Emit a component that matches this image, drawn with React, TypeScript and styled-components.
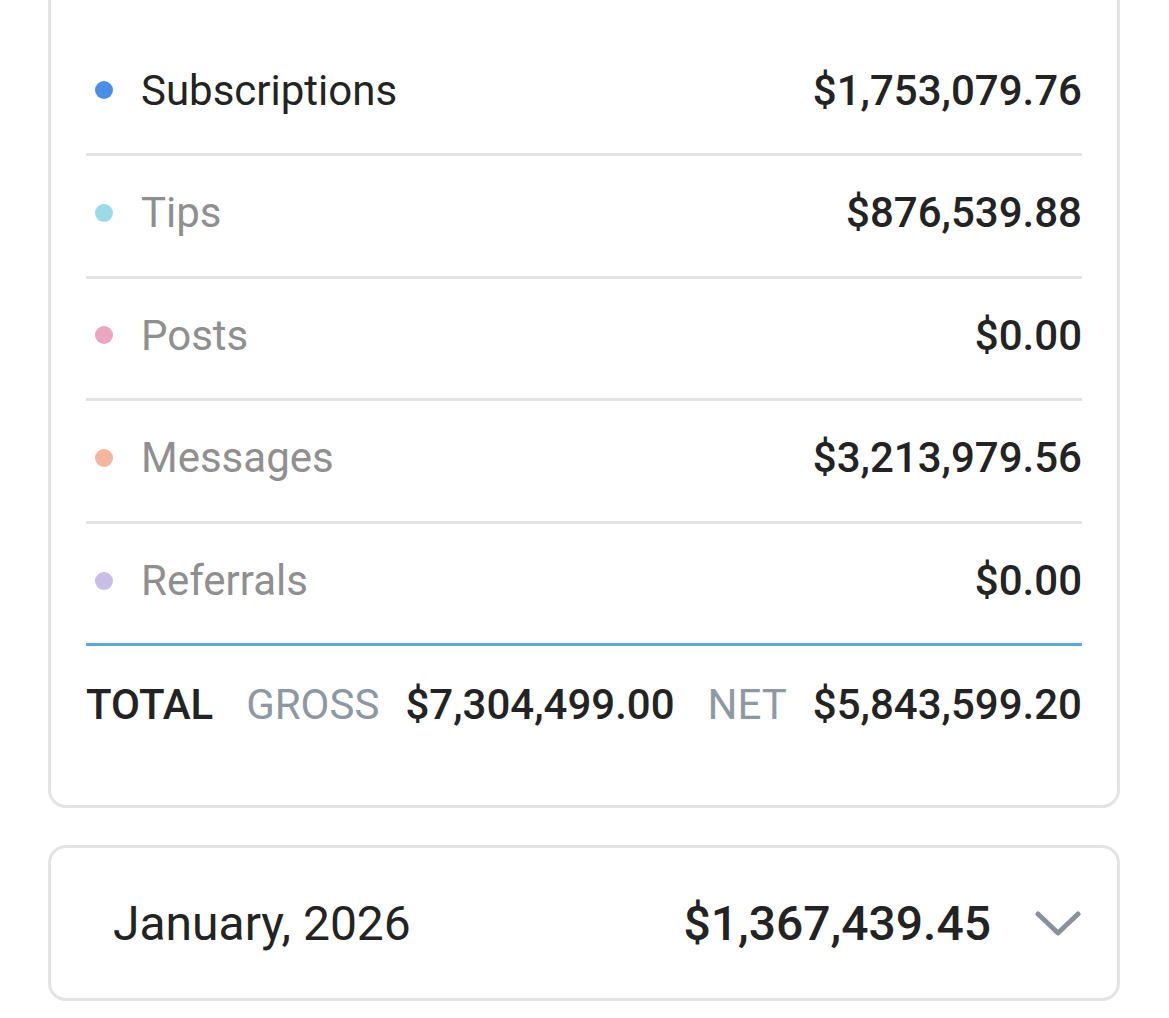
import React from "react";
import styled, { createGlobalStyle } from "styled-components";

const GlobalStyle = createGlobalStyle`
  html, body {
    margin: 0;
    padding: 0;
    background: #ffffff;
    overflow: hidden;
  }
  body {
    font-family: Roboto, "Noto Sans", Arial, sans-serif;
    color: #232323;
    -webkit-font-smoothing: antialiased;
  }
`;

const Page = styled.div`
  display: flex;
  flex-direction: column;
  gap: 37px;
  padding: 0 49px 0 48px;
`;

const Card = styled.section`
  border: 3px solid #e3e3e3;
  border-radius: 18px;
  background: #fff;
  margin-top: -20px;
  padding: 50.4px 35px 43px 35px;
`;

const List = styled.div`
  display: flex;
  flex-direction: column;
`;

const Row = styled.div`
  display: flex;
  align-items: center;
  justify-content: space-between;
  height: 113.6px;
  padding-bottom: 6px;
  border-bottom: 3px solid #e3e3e3;
  &:last-child {
    border-bottom-color: #5aa9da;
  }
`;

const Label = styled.div<{ $active: boolean }>`
  display: flex;
  align-items: center;
  gap: 28px;
  font-size: 42px;
  font-weight: 400;
  color: ${(p) => (p.$active ? "#232323" : "#8f8f8f")};
`;

const Dot = styled.span<{ $color: string }>`
  width: 18px;
  height: 18px;
  border-radius: 50%;
  background: ${(p) => p.$color};
  margin-left: 9px;
  flex: none;
`;

const Amount = styled.div<{ $size?: number }>`
  font-size: ${(p) => p.$size ?? 42}px;
  font-weight: 500;
  color: #232323;
`;

const TotalRow = styled.div`
  display: flex;
  align-items: center;
  justify-content: space-between;
  height: 116px;
`;

const TotalLabel = styled.div`
  font-size: 42px;
  font-weight: 500;
  color: #232323;
`;

const Group = styled.div`
  display: flex;
  align-items: center;
  gap: 26px;
`;

const Caption = styled.span`
  font-size: 42px;
  font-weight: 400;
  color: #8e98a3;
`;

const MonthCard = styled.section`
  border: 3px solid #e3e3e3;
  border-radius: 18px;
  background: #fff;
  height: 150px;
  display: flex;
  align-items: center;
  padding: 0 36px 0 62px;
`;

const Month = styled.div`
  flex: 1;
  font-size: 48px;
  font-weight: 400;
  color: #232323;
`;

const Chevron = styled.svg`
  width: 46px;
  height: 28px;
  margin-left: 44px;
  flex: none;
`;

const rows = [
  { name: "Subscriptions", color: "#4a8fe6", amount: "$1,753,079.76", active: true },
  { name: "Tips", color: "#9bdbe7", amount: "$876,539.88", active: false },
  { name: "Posts", color: "#eba5bf", amount: "$0.00", active: false },
  { name: "Messages", color: "#f4b59e", amount: "$3,213,979.56", active: false },
  { name: "Referrals", color: "#c8bee6", amount: "$0.00", active: false },
];

export default function App() {
  return (
    <>
      <GlobalStyle />
      <Page>
        <Card>
          <List>
            {rows.map((r) => (
              <Row key={r.name}>
                <Label $active={r.active}>
                  <Dot $color={r.color} />
                  {r.name}
                </Label>
                <Amount>{r.amount}</Amount>
              </Row>
            ))}
          </List>
          <TotalRow>
            <TotalLabel>TOTAL</TotalLabel>
            <Group>
              <Caption>GROSS</Caption>
              <Amount>$7,304,499.00</Amount>
            </Group>
            <Group>
              <Caption>NET</Caption>
              <Amount>$5,843,599.20</Amount>
            </Group>
          </TotalRow>
        </Card>
        <MonthCard>
          <Month>January, 2026</Month>
          <Amount $size={48}>$1,367,439.45</Amount>
          <Chevron viewBox="0 0 46 28" fill="none">
            <polyline
              points="3,5 23,24 43,5"
              stroke="#8a919c"
              strokeWidth="5"
              strokeLinecap="round"
              strokeLinejoin="round"
            />
          </Chevron>
        </MonthCard>
      </Page>
    </>
  );
}
